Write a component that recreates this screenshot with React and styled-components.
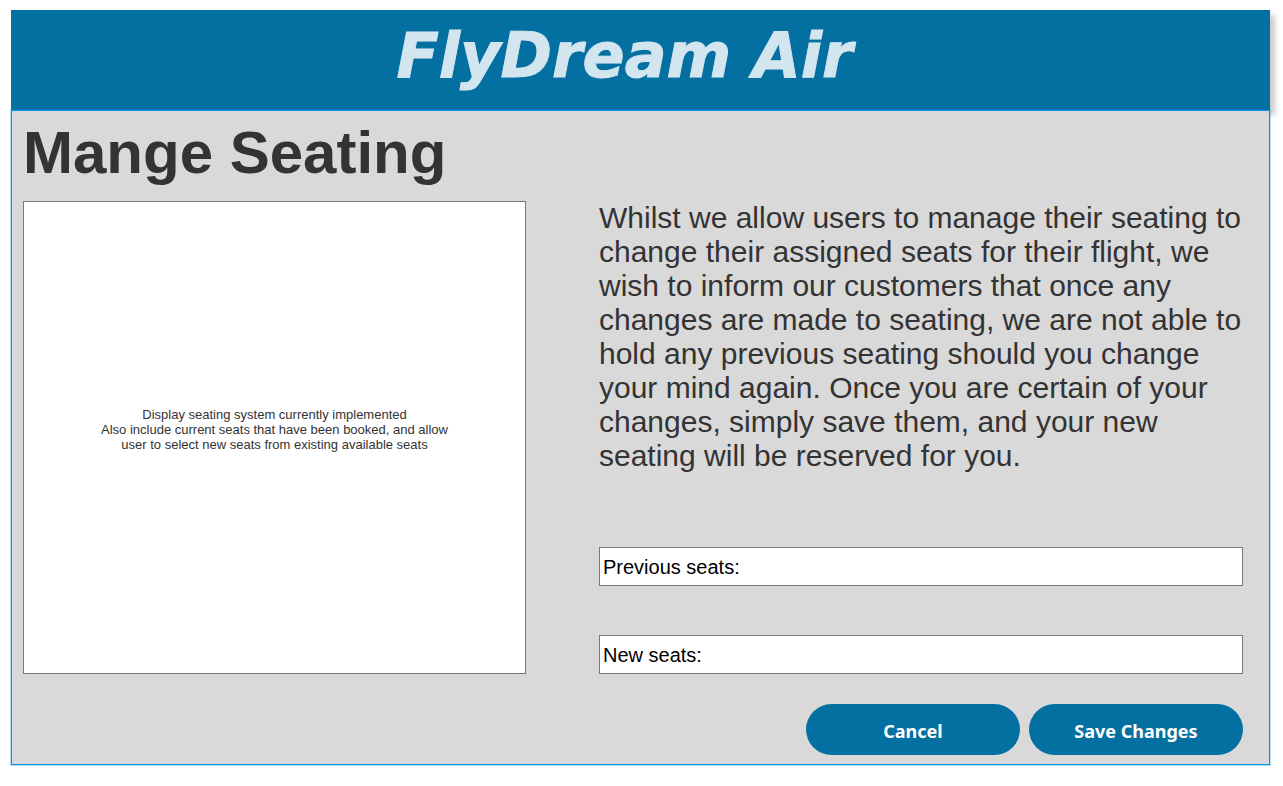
import React from "react";
import styled, { createGlobalStyle } from "styled-components";

const GlobalStyle = createGlobalStyle`
  *, *::before, *::after { box-sizing: border-box; }
  body {
    margin: 0;
    background: #ffffff;
    color: #333333;
    font-family: "Liberation Sans", Arial, sans-serif;
  }
`;

const Page = styled.div`
  padding: 10px 13px 20px 11px;
`;

const Header = styled.header`
  display: flex;
  align-items: center;
  justify-content: center;
  height: 100px;
  padding: 0 32px 8px 0;
  background: #0470a2;
  box-shadow: 5px 5px 5px rgba(0, 0, 0, 0.2);
`;

const Brand = styled.a`
  color: #d3e5ee;
  font-family: "DejaVu Sans", Verdana, sans-serif;
  font-size: 62px;
  line-height: 80px;
  font-weight: 700;
  font-style: italic;
  text-decoration: none;
  white-space: nowrap;
  -webkit-text-stroke: 1px #d3e5ee;
`;

const Panel = styled.main`
  padding: 8px 26px 9px 11px;
  border: 1px solid #078fe0;
  box-shadow: 0 0 0 1px rgba(7, 143, 224, 0.3);
  background: #d9d9d9;
`;

const Title = styled.h1`
  margin: 0 0 14px;
  font-size: 60px;
  line-height: 68px;
  font-weight: 700;
`;

const Columns = styled.div`
  display: grid;
  grid-template-columns: 503fr 644fr;
  gap: 73px;

  @media (max-width: 800px) {
    grid-template-columns: 1fr;
    gap: 30px;
  }
`;

const SeatMap = styled.section`
  display: flex;
  align-items: center;
  justify-content: center;
  min-height: 473px;
  padding: 0 60px 16px;
  border: 1px solid #797979;
  background: #ffffff;
  font-size: 13px;
  line-height: 15px;
  text-align: center;
`;

const SeatNote = styled.p`
  max-width: 360px;
  margin: 0;
`;

const Details = styled.section`
  display: flex;
  flex-direction: column;
  justify-content: space-between;
  gap: 30px;
`;

const Notice = styled.p`
  margin: 0;
  font-size: 30px;
  line-height: 34px;
`;

const Fields = styled.div`
  display: grid;
  gap: 49px;
`;

const Field = styled.label`
  display: flex;
  align-items: center;
  gap: 6px;
  height: 39px;
  padding: 0 3px;
  border: 1px solid #797979;
  background: #ffffff;
  color: #000000;
  font-size: 20px;
  line-height: 24px;
`;

const SeatInput = styled.input`
  flex: 1;
  min-width: 0;
  padding: 0;
  border: 0;
  outline: 0;
  background: transparent;
  color: inherit;
  font: inherit;
`;

const Actions = styled.div`
  display: flex;
  flex-wrap: wrap;
  justify-content: flex-end;
  gap: 9px;
  margin-top: 30px;
`;

const PillButton = styled.button`
  width: 214px;
  height: 51px;
  padding: 2px 0 0;
  border: 0;
  border-radius: 26px;
  background: #0470a2;
  color: #ffffff;
  font-family: "Noto Sans", "Open Sans", sans-serif;
  font-size: 18px;
  line-height: 26px;
  font-weight: 700;
  cursor: pointer;
`;

function SeatField({ label, name }) {
  return (
    <Field>
      <span>{label}</span>
      <SeatInput type="text" name={name} />
    </Field>
  );
}

export default function App() {
  return (
    <>
      <GlobalStyle />
      <Page>
        <Header>
          <Brand href="#home">FlyDream Air</Brand>
        </Header>
        <Panel>
          <Title>Mange Seating</Title>
          <Columns>
            <SeatMap>
              <SeatNote>
                Display seating system currently implemented
                <br />
                Also include current seats that have been booked, and allow
                user to select new seats from existing available seats
              </SeatNote>
            </SeatMap>
            <Details>
              <Notice>
                Whilst we allow users to manage their seating to change their
                assigned seats for their flight, we wish to inform our
                customers that once any changes are made to seating, we are not
                able to hold any previous seating should you change your mind
                again. Once you are certain of your changes, simply save them,
                and your new seating will be reserved for you.
              </Notice>
              <Fields>
                <SeatField label="Previous seats:" name="previousSeats" />
                <SeatField label="New seats:" name="newSeats" />
              </Fields>
            </Details>
          </Columns>
          <Actions>
            <PillButton type="button">Cancel</PillButton>
            <PillButton type="button">Save Changes</PillButton>
          </Actions>
        </Panel>
      </Page>
    </>
  );
}
